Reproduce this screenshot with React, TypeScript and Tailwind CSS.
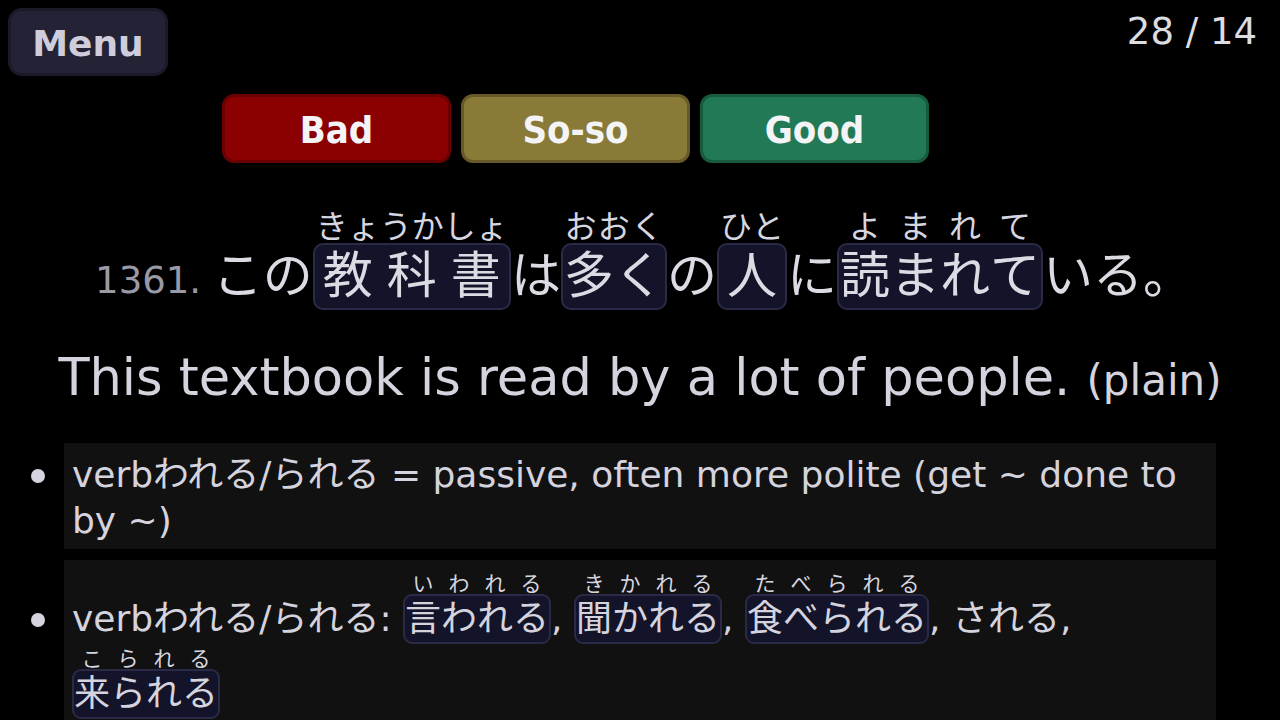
import React from 'react';

function Ruby({ base, reading, big }: { base: string; reading: string; big?: boolean }) {
    return (
        <span className="inline-block align-baseline">
            <span
                className={
                    big
                        ? "flex justify-around px-[3px] text-[32px] leading-[38px] text-[#d6d6e0] font-['Noto_Sans_CJK_JP',sans-serif]"
                        : "flex justify-around px-[2px] text-[21px] leading-[24px] text-[#d6d6e0] font-['Noto_Sans_CJK_JP',sans-serif]"
                }
            >
                {[...reading].map((c, i) => (
                    <span key={i}>{c}</span>
                ))}
            </span>
            <span
                className={
                    big
                        ? 'flex justify-around rounded-[10px] border-2 border-[#2a2a47] bg-[#13132a] px-[1px] py-[2px] leading-[59px]'
                        : 'flex justify-around rounded-[9px] border-2 border-[#2a2a47] bg-[#13132a] py-[1px] leading-[44px]'
                }
            >
                {[...base].map((c, i) => (
                    <span key={i}>{c}</span>
                ))}
            </span>
        </span>
    );
}

function RateButton({ label, className }: { label: string; className: string }) {
    return (
        <button
            className={
                "flex h-[69px] w-[229px] items-center justify-center rounded-[12px] border-[3px] pt-[3px] text-[38px] font-bold text-[#f4f4f6] font-['DejaVu_Sans_Condensed','DejaVu_Sans',sans-serif] " +
                className
            }
        >
            {label}
        </button>
    );
}

export default function App() {
    return (
        <div className="min-h-[720px] w-full overflow-hidden bg-black text-[#d4d3de] font-['DejaVu_Sans','Noto_Sans_CJK_JP',sans-serif]">
            <header className="flex items-start justify-between pl-[8px] pr-[23px] pt-[8px]">
                <button className="flex h-[68px] w-[160px] items-center justify-center rounded-[14px] border-[3px] border-[#1b1a29] bg-[#242336] pt-[4px] text-[36px] font-bold text-[#cfcddb]">
                    Menu
                </button>
                <div className="text-[37px] leading-[48px] text-[#dcdce2]">28 / 14</div>
            </header>

            <div className="mt-[18px] flex gap-[10px] pl-[222px]">
                <RateButton label="Bad" className="border-[#6a0000] bg-[#8b0000]" />
                <RateButton label="So-so" className="border-[#675a28] bg-[#8a7a38]" />
                <RateButton label="Good" className="border-[#175b3c] bg-[#217a55]" />
            </div>

            <div className="mt-[42px] pl-[8px] text-center text-[50px] leading-[72px] text-[#dcdbe4]">
                <span className="text-[37px] text-[#9a9aa6]">1361. </span>
                この
                <Ruby big base="教科書" reading="きょうかしょ" />
                は
                <Ruby big base="多く" reading="おおく" />
                の
                <Ruby big base="人" reading="ひと" />
                に
                <Ruby big base="読まれて" reading="よまれて" />
                いる。
            </div>

            <div className="mt-[30px] text-center text-[51px] leading-[62px] text-[#d4d3de]">
                This textbook is read by a lot of people. <span className="text-[42px]">(plain)</span>
            </div>

            <ul className="mx-[64px] mt-[31px] flex flex-col gap-[11px]">
                <li className="relative bg-[#111111] px-[8px] pb-[5px] pt-[9px] text-[36px] leading-[46px]">
                    <span className="absolute left-[-33px] top-[26px] h-[14px] w-[14px] rounded-full bg-[#d4d3de]" />
                    verbわれる/られる = passive, often more polite (get ~ done to by ~)
                </li>
                <li className="relative bg-[#111111] px-[8px] pb-[4px] pt-[10px] text-[36px] leading-[52px]">
                    <span className="absolute left-[-33px] top-[53px] h-[14px] w-[14px] rounded-full bg-[#d4d3de]" />
                    verbわれる/られる: <Ruby base="言われる" reading="いわれる" />, <Ruby base="聞かれる" reading="きかれる" />,{' '}
                    <Ruby base="食べられる" reading="たべられる" />, される, <Ruby base="来られる" reading="こられる" />
                </li>
            </ul>
        </div>
    );
}
